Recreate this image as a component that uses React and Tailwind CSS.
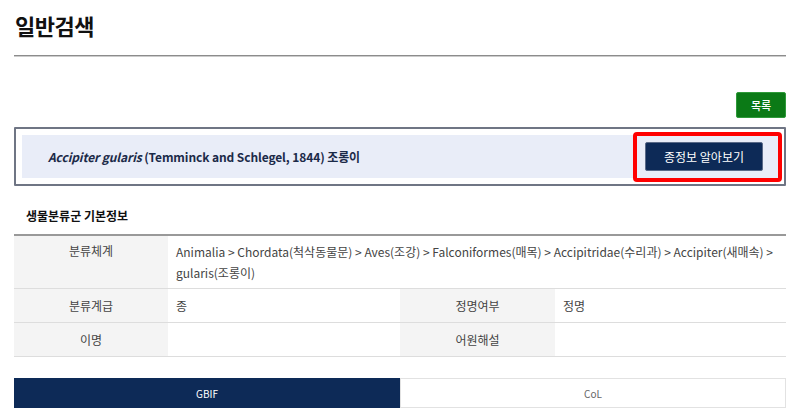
export default function App() {
  const font = { fontFamily: '"Noto Sans CJK KR", "Noto Sans", sans-serif' };
  return (
    <div className="w-[800px] h-[416px] bg-white overflow-hidden text-[#333]" style={font}>
      <div className="px-[14px]">
        <h1 className="pt-[10px] pl-[1px] text-[22px] leading-[30px] font-bold text-[#111] tracking-[-0.5px]">일반검색</h1>
        <div className="mt-[15px] h-[2px] bg-[#8c8c8c] border-b border-[#ccc]" />
        <div className="mt-[35px] flex justify-end">
          <button className="w-[50px] h-[26px] rounded-[2px] bg-[#0b7a16] text-white text-[11px] font-medium border border-[#2f9a3a]">목록</button>
        </div>
        <div className="mt-[9px] border-2 border-[#6f7584] rounded-[1px] p-[6px] h-[59px]">
          <div className="h-full bg-[#e9edf8] flex items-center justify-between pl-[26px]">
            <div className="text-[12px] font-bold text-[#1b2a48] tracking-[-0.1px]">
              <i>Accipiter gularis</i> (Temminck and Schlegel, 1844) 조롱이
            </div>
            <div className="border-[4px] border-[#ff0000] rounded-[4px] pl-[8px] pr-[15px] py-[5px] -my-[6px] -mr-[4px] h-[50px] flex items-center">
              <button className="w-[118px] h-[29px] bg-[#0d2a57] text-white text-[12px] rounded-[2px] border border-[#5a6a88]">종정보 알아보기</button>
            </div>
          </div>
        </div>
        <h2 className="mt-[22px] pl-[12px] text-[12px] font-bold text-[#111] leading-[16px]">생물분류군 기본정보</h2>
        <div className="mt-[10px] border-t-2 border-[#999] text-[12px]">
          <div className="grid grid-cols-[154px_1fr] border-b border-[#ddd]">
            <div className="bg-[#f4f4f4] text-center pt-[6px] pb-[5px] text-[#444]">분류체계</div>
            <div className="px-[8px] pt-[5px] pb-[5px] leading-[21px] text-[#444]">
              Animalia &gt; Chordata(척삭동물문) &gt; Aves(조강) &gt; Falconiformes(매목) &gt; Accipitridae(수리과) &gt; Accipiter(새매속) &gt; gularis(조롱이)
            </div>
          </div>
          <div className="grid grid-cols-[154px_232px_155px_1fr] h-[34px] border-b border-[#ddd] items-stretch">
            <div className="bg-[#f4f4f4] flex items-center justify-center text-[#444]">분류계급</div>
            <div className="flex items-center px-[8px] text-[#444]">종</div>
            <div className="bg-[#f4f4f4] flex items-center justify-center text-[#444]">정명여부</div>
            <div className="flex items-center px-[8px] text-[#444]">정명</div>
          </div>
          <div className="grid grid-cols-[154px_232px_155px_1fr] h-[34px] border-b border-[#ddd] items-stretch">
            <div className="bg-[#f4f4f4] flex items-center justify-center text-[#444]">이명</div>
            <div className="flex items-center px-[8px]"></div>
            <div className="bg-[#f4f4f4] flex items-center justify-center text-[#444]">어원해설</div>
            <div className="flex items-center px-[8px]"></div>
          </div>
        </div>
        <div className="mt-[21px] grid grid-cols-2 h-[30px] text-[10px]">
          <div className="bg-[#0d2a57] text-white flex items-center justify-center">GBIF</div>
          <div className="border border-[#e2e2e2] text-[#666] flex items-center justify-center">CoL</div>
        </div>
      </div>
    </div>
  );
}
